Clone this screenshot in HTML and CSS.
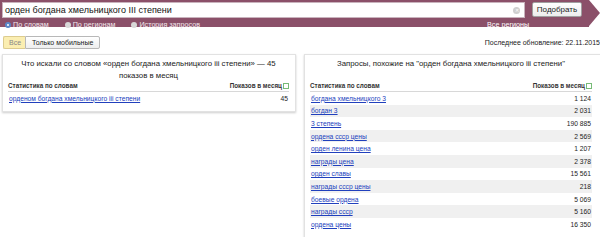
FILE: index.html
```html
<!DOCTYPE html>
<html>
<head>
<meta charset="utf-8">
<link rel="stylesheet" href="styles.css">
</head>
<body>
<div class="topbar">
  <div class="search-row">
    <div class="input">
      <span class="query">орден богдана хмельницкого III степени</span>
      <span class="clear">✕</span>
    </div>
    <div class="btn">Подобрать</div>
  </div>
  <div class="radio-row">
    <div class="radios">
      <span class="radio on"><i></i>По словам</span>
      <span class="radio"><i></i>По регионам</span>
      <span class="radio"><i></i>История запросов</span>
    </div>
    <a class="regions">Все регионы</a>
  </div>
  <div class="arrow"></div>
</div>
<div class="subbar">
  <div class="tabs">
    <span class="tab active">Все</span><span class="tab">Только мобильные</span>
  </div>
  <div class="updated">Последнее обновление: 22.11.2015</div>
</div>
<div class="panels">
  <div class="panel left">
    <div class="ptitle">Что искали со словом «орден богдана хмельницкого iii степени» — 45 показов в месяц</div>
    <div class="thead"><span>Статистика по словам</span><span>Показов в месяц<b class="ic"></b></span></div>
    <div class="row"><a>орденом богдана хмельницкого iii степени</a><span>45</span></div>
  </div>
  <div class="panel right">
    <div class="ptitle">Запросы, похожие на "орден богдана хмельницкого iii степени"</div>
    <div class="thead"><span>Статистика по словам</span><span>Показов в месяц<b class="ic"></b></span></div>
    <div class="row"><a>богдана хмельницкого 3</a><span>1 124</span></div>
    <div class="row alt"><a>богдан 3</a><span>2 031</span></div>
    <div class="row"><a>3 степень</a><span>190 885</span></div>
    <div class="row alt"><a>ордена ссср цены</a><span>2 569</span></div>
    <div class="row"><a>орден ленина цена</a><span>1 207</span></div>
    <div class="row alt"><a>награды цена</a><span>2 378</span></div>
    <div class="row"><a>орден славы</a><span>15 561</span></div>
    <div class="row alt"><a>награды ссср цены</a><span>218</span></div>
    <div class="row"><a>боевые ордена</a><span>5 069</span></div>
    <div class="row alt"><a>награды ссср</a><span>5 160</span></div>
    <div class="row"><a>ордена цены</a><span>16 350</span></div>
  </div>
</div>
</body>
</html>
```
FILE: styles.css
```css
* { box-sizing: border-box; }
html, body { margin: 0; padding: 0; background: #fff; }
body {
  width: 600px;
  height: 237px;
  overflow: hidden;
  font-family: "Liberation Sans", Arial, sans-serif;
  color: #000;
}
.topbar {
  position: relative;
  height: 27px;
  background: #8b5069;
  margin-right: 11px;
  padding: 2px 0 0 2px;
}
.arrow {
  position: absolute;
  right: -11px;
  top: 0;
  width: 0;
  height: 0;
  border-top: 13.5px solid transparent;
  border-bottom: 13.5px solid transparent;
  border-left: 11px solid #8b5069;
}
.search-row { display: flex; align-items: flex-start; height: 16px; }
.input {
  width: 523px;
  height: 16px;
  background: #fff;
  border: 1px solid #c9b3bd;
  display: flex;
  align-items: center;
  justify-content: space-between;
  padding: 0 4px 0 2px;
}
.query { font-size: 9px; color: #111; }
.clear {
  width: 7px; height: 7px; border-radius: 50%;
  background: #cfcfcf; color: #fff; font-size: 5px; line-height: 7px; text-align: center;
}
.btn {
  margin-left: 7px;
  width: 50px;
  height: 15px;
  background: linear-gradient(#fff, #ececec);
  border: 1px solid #a0a0a0;
  border-radius: 2px;
  font-size: 8px;
  line-height: 13px;
  text-align: center;
  color: #222;
}
.radio-row { display: flex; align-items: center; height: 9px; margin-top: 2px; }
.radios { display: flex; width: 485px; }
.radio { color: #f2e8ed; font-size: 7.2px; display: flex; align-items: center; margin-right: 13px; padding-left: 3px; }
.radio i {
  width: 6px; height: 6px; border-radius: 50%; background: #d8d8d8; margin-right: 2px; display: inline-block;
}
.radio.on i { background: #fff; border: 2px solid #5a88c8; }
.regions { color: #fff; font-size: 7.2px; text-decoration: underline; }
.subbar {
  display: flex;
  justify-content: space-between;
  align-items: center;
  padding: 9px 0 0 3px;
}
.tabs { display: flex; }
.tab {
  font-size: 7px;
  height: 13px;
  line-height: 11px;
  border: 1px solid #b8b8b8;
  padding: 0 6px;
  background: linear-gradient(#fff, #eee);
  color: #222;
  border-radius: 0 2px 2px 0;
}
.tab.active {
  background: #fbeeb1;
  border-color: #dccb8e;
  color: #888;
  border-radius: 2px 0 0 2px;
  border-right: none;
  width: 22px;
  padding: 0 5px;
}
.updated { font-size: 7px; color: #222; }
.panels { display: flex; gap: 8px; padding: 5px 0 0 2px; align-items: flex-start; }
.panel {
  border: 1px solid #e2e2e2;
  box-shadow: 0 1px 2px rgba(0,0,0,0.2);
  padding: 3px 6px 6px 5px;
  background: #fff;
}
.left { width: 294px; }
.right { width: 300px; margin-right: -4px; padding-right: 11px; }
.ptitle {
  font-size: 7.8px;
  text-align: center;
  line-height: 12px;
  color: #222;
  padding: 0 6px;
  height: 23px;
}
.thead {
  display: flex;
  justify-content: space-between;
  font-size: 6.3px;
  font-weight: bold;
  color: #333;
  height: 11px;
  line-height: 10px;
  border-bottom: 1px solid #d8d8d8;
}
.ic {
  display: inline-block; width: 6px; height: 6px; border: 1px solid #7b7; margin-left: 1px;
  vertical-align: -1px;
}
.row {
  display: flex;
  justify-content: space-between;
  align-items: center;
  height: 12.6px;
  font-size: 6.7px;
  padding: 0 1px;
}
.row.alt { background: #f0f0f0; }
.row a { color: #2140bd; text-decoration: underline; }
.row span { color: #222; }
```
